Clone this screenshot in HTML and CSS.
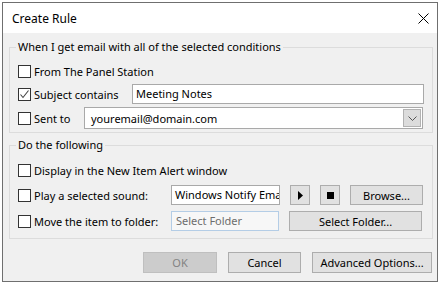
FILE: index.html
```html
<!DOCTYPE html>
<html lang="en">
<head>
    <meta charset="UTF-8">
    <meta name="viewport" content="width=device-width, initial-scale=1.0">
    <title>Create Rule</title>
    <link rel="stylesheet" href="styles.css">
</head>
<body>
    <div class="window">
        <div class="titlebar">
            <span class="title">Create Rule</span>
            <svg class="close" width="11" height="11" viewBox="0 0 11 11">
                <path d="M0.5 0.5 L10.5 10.5 M10.5 0.5 L0.5 10.5" stroke="#000" stroke-width="1" fill="none"/>
            </svg>
        </div>
        <div class="dialog-body">
            <fieldset class="group group-conditions">
                <legend>When I get email with all of the selected conditions</legend>
                <div class="row row-a">
                    <span class="check"></span>
                    <span class="label">From The Panel Station</span>
                </div>
                <div class="row row-b">
                    <span class="check checked">
                        <svg width="11" height="11" viewBox="0 0 11 11">
                            <path d="M1.5 5.5 L4 8.5 L9.5 1.5" stroke="#444" stroke-width="1.1" fill="none"/>
                        </svg>
                    </span>
                    <span class="label">Subject contains</span>
                    <div class="textbox subject">Meeting Notes</div>
                </div>
                <div class="row row-c">
                    <span class="check"></span>
                    <span class="label">Sent to</span>
                    <div class="combo">
                        <span class="combo-text">youremail@domain.com</span>
                        <span class="combo-btn">
                            <svg width="9" height="5" viewBox="0 0 9 5">
                                <path d="M0.5 0.5 L4.5 4.5 L8.5 0.5" stroke="#555" stroke-width="1" fill="none"/>
                            </svg>
                        </span>
                    </div>
                </div>
            </fieldset>

            <fieldset class="group group-actions">
                <legend>Do the following</legend>
                <div class="row row-d">
                    <span class="check"></span>
                    <span class="label">Display in the New Item Alert window</span>
                </div>
                <div class="row row-e">
                    <span class="check"></span>
                    <span class="label fixed">Play a selected sound:</span>
                    <div class="textbox sound">Windows Notify Email</div>
                    <button class="btn icon-btn">
                        <svg width="5" height="9" viewBox="0 0 5 9"><path d="M0 0 L5 4.5 L0 9 Z" fill="#000"/></svg>
                    </button>
                    <button class="btn icon-btn">
                        <svg width="7" height="7" viewBox="0 0 7 7"><rect width="7" height="7" fill="#000"/></svg>
                    </button>
                    <button class="btn browse">Browse...</button>
                </div>
                <div class="row row-f">
                    <span class="check"></span>
                    <span class="label fixed">Move the item to folder:</span>
                    <div class="textbox folder">Select Folder</div>
                    <button class="btn folder-btn">Select Folder...</button>
                </div>
            </fieldset>

            <div class="actions">
                <button class="btn ok" disabled>OK</button>
                <button class="btn cancel">Cancel</button>
                <button class="btn advanced">Advanced Options...</button>
            </div>
        </div>
    </div>
</body>
</html>
```

FILE: styles.css
```css
body {
    margin: 0;
    padding: 0;
    background-color: #fff;
    font-family: 'Noto Sans', sans-serif;
    font-size: 11px;
    color: #000;
}

.window {
    box-sizing: border-box;
    width: 436px;
    height: 280px;
    margin: 2px 0 0 2px;
    border: 1px solid #6f6f6f;
    background-color: #f0f0f0;
    display: flex;
    flex-direction: column;
}

.titlebar {
    height: 30px;
    background-color: #fff;
    display: flex;
    align-items: center;
    justify-content: space-between;
    padding: 0 8px 0 9px;
    font-size: 12px;
}

.close {
    margin-top: 1px;
}

.dialog-body {
    padding: 6px 4px 0 6px;
}

.group {
    margin: 0;
    padding: 0 8px 0 8px;
    border: 1px solid #dcdcdc;
    min-width: 0;
}

.group legend {
    padding: 0 2px;
    margin-left: -2px;
    line-height: 16px;
}

.group-conditions {
    padding-top: 5px;
    padding-bottom: 3px;
}

.group-actions {
    margin-top: 4px;
    padding-top: 5px;
    padding-bottom: 7px;
}

.row {
    display: flex;
    align-items: center;
    white-space: nowrap;
}

.row-a { height: 23px; }
.row-b { height: 20px; margin-top: 1px; }
.row-c { height: 22px; margin-top: 3px; }
.row-d { height: 24px; }
.row-e { height: 20px; margin-top: 3px; }
.row-f { height: 20px; margin-top: 6px; }

.check {
    box-sizing: border-box;
    width: 13px;
    height: 13px;
    border: 1px solid #333;
    background-color: #fff;
    margin-right: 3px;
    display: flex;
    align-items: center;
    justify-content: center;
    flex-shrink: 0;
}

.check svg {
    display: block;
}

.label.fixed {
    width: 137px;
}

.textbox {
    box-sizing: border-box;
    height: 20px;
    line-height: 18px;
    border: 1px solid #a9a9a9;
    background-color: #fff;
    padding: 0 3px;
    overflow: hidden;
    white-space: nowrap;
}

.textbox.subject {
    width: 292px;
    margin-left: auto;
}

.textbox.sound {
    width: 109px;
    text-overflow: clip;
}

.textbox.folder {
    width: 108px;
    border-color: #b4cde6;
    background-color: #f7f7f7;
    color: #6d6d6d;
    padding-left: 4px;
}

.combo {
    box-sizing: border-box;
    width: 339px;
    height: 22px;
    margin-left: auto;
    margin-right: 1px;
    border: 1px solid #a9a9a9;
    background-color: #fff;
    display: flex;
    align-items: center;
    padding: 1px;
}

.combo-text {
    flex: 1;
    padding-left: 5px;
}

.combo-btn {
    box-sizing: border-box;
    width: 18px;
    height: 18px;
    border: 1px solid #b2b2b2;
    background-color: #dcdcdc;
    display: flex;
    align-items: center;
    justify-content: center;
}

.btn {
    box-sizing: border-box;
    height: 20px;
    padding: 0;
    border: 1px solid #adadad;
    background-color: #e1e1e1;
    font-family: 'Noto Sans', sans-serif;
    font-size: 11px;
    color: #000;
    display: flex;
    align-items: center;
    justify-content: center;
}

.icon-btn {
    width: 20px;
    margin-left: 10px;
}

.browse {
    width: 73px;
    margin-left: 10px;
}

.folder-btn {
    width: 133px;
    margin-left: 10px;
}

.actions {
    display: flex;
    justify-content: flex-end;
    gap: 11px;
    margin-top: 13px;
    padding-right: 1px;
}

.actions .btn {
    height: 21px;
}

.ok {
    width: 74px;
    background-color: #cccccc;
    border-color: #bfbfbf;
    color: #838383;
}

.cancel {
    width: 73px;
}

.advanced {
    width: 120px;
}
```
